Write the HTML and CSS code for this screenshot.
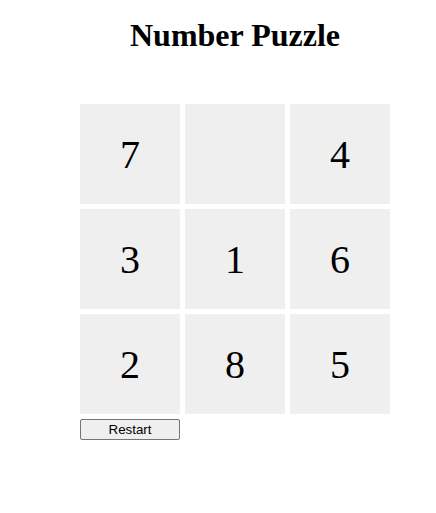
FILE: index.html
```html
<!DOCTYPE html>
<html>
<head>
<meta charset="utf-8">
<title>Number Puzzle</title>
<link rel="stylesheet" href="styles.css">
</head>
<body>
<main class="game">
  <h1 class="title">Number Puzzle</h1>
  <div class="board">
    <div class="tile">7</div>
    <div class="tile"></div>
    <div class="tile">4</div>
    <div class="tile">3</div>
    <div class="tile">1</div>
    <div class="tile">6</div>
    <div class="tile">2</div>
    <div class="tile">8</div>
    <div class="tile">5</div>
  </div>
  <button class="restart">Restart</button>
</main>
</body>
</html>
```
FILE: styles.css
```css
html, body {
  margin: 0;
  padding: 0;
  background: #ffffff;
}

.game {
  width: 310px;
  margin-left: 80px;
  padding-top: 17px;
  font-family: "Liberation Serif", "Times New Roman", serif;
  color: #000;
}

.title {
  margin: 0;
  font-size: 32px;
  line-height: 37px;
  font-weight: bold;
  text-align: center;
}

.board {
  margin-top: 50px;
  display: grid;
  grid-template-columns: repeat(3, 100px);
  grid-auto-rows: 100px;
  gap: 5px;
}

.tile {
  background: #efefef;
  display: flex;
  align-items: center;
  justify-content: center;
  font-size: 40px;
}

.restart {
  display: block;
  margin-top: 5px;
  width: 100px;
  height: 21px;
  padding: 1px 6px;
  font-family: "Liberation Sans", Arial, sans-serif;
  font-size: 13.33px;
  color: #000;
  background: #efefef;
  border: 1px solid #767676;
  border-radius: 2px;
}
```
